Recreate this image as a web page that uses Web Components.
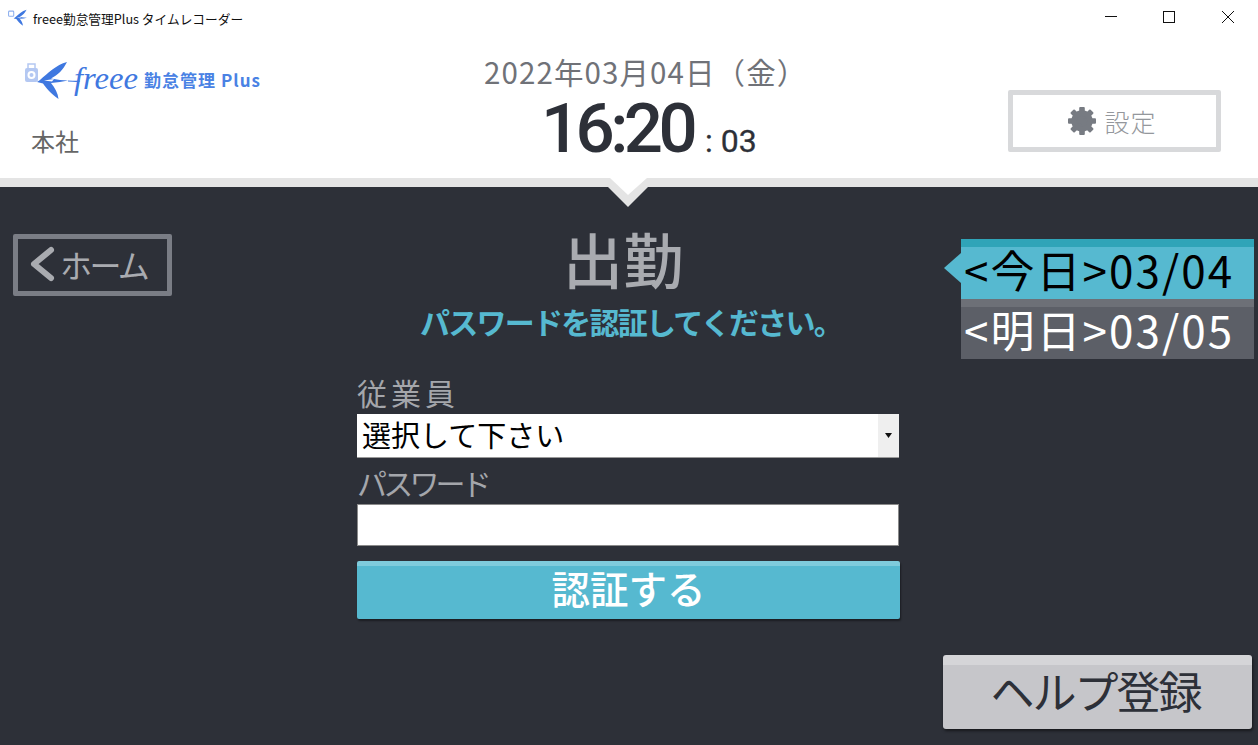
<!DOCTYPE html>
<html lang="ja">
<head>
<meta charset="utf-8">
<title>freee勤怠管理Plus タイムレコーダー</title>
<style>
  html, body { margin: 0; height: 100%; overflow: hidden; }
  body { font-family: "Noto Sans CJK JP", "Noto Sans", sans-serif; background: #2d3038; }
  time-recorder { width: 1258px; height: 745px; }
</style>
</head>
<body>
<time-recorder>
  <title-bar slot="top">freee勤怠管理Plus タイムレコーダー</title-bar>
  <app-header slot="top"></app-header>
  <home-button slot="left">ホーム</home-button>
  <auth-form slot="center"></auth-form>
  <day-tab slot="right" active>&lt;今日&gt;03/04</day-tab>
  <day-tab slot="right">&lt;明日&gt;03/05</day-tab>
  <help-button slot="right">ヘルプ登録</help-button>
</time-recorder>

<script>
const FONT = '"Noto Sans CJK JP", "Noto Sans", sans-serif';

function define(name, html) {
  customElements.define(name, class extends HTMLElement {
    constructor() {
      super();
      this.attachShadow({ mode: 'open' }).innerHTML = html;
    }
  });
}

const BIRD = `
  <path d="M40 78 C48 71 56 63 67 60 C63 68 58 73 51 76.5 L60 78 L68 78.5 L60 80 L51 81 C55 86 58 91 58.5 97 C51 92 46 86 43 81.5 L37 80 Z" fill="#3f78e0"/>
  <path d="M44 78.5 L54 77 L52 79.5 Z" fill="#fff"/>`;

define('title-bar', `
  <style>
    :host { display: flex; align-items: center; height: 36px; background: #fff; color: #111;
      font: 12.7px ${FONT}; box-sizing: border-box; padding-left: 8px; }
    .icon { width: 20px; height: 18px; margin-right: 5px; }
    .text { flex: 1; white-space: nowrap; }
    .ctl { display: flex; }
    .ctl svg { width: 59px; height: 36px; display: block; }
  </style>
  <svg class="icon" viewBox="24 58 46 42"><rect x="25" y="63" width="12" height="12" rx="2" fill="none" stroke="#8fb0ee" stroke-width="2.5"/>${BIRD}</svg>
  <span class="text"><slot></slot></span>
  <span class="ctl">
    <svg viewBox="0 0 59 36"><path d="M24 16.5H36" stroke="#111" fill="none"/></svg>
    <svg viewBox="0 0 59 36"><rect x="23.5" y="11.5" width="11" height="11" stroke="#111" fill="none"/></svg>
    <svg viewBox="0 0 59 36"><path d="M23 11L35 23M35 11L23 23" stroke="#111" fill="none"/></svg>
  </span>`);

define('brand-logo', `
  <style>
    :host { display: block; width: 240px; height: 40px; }
    svg { display: block; width: 240px; height: 40px; }
  </style>
  <svg viewBox="24 58 240 40">
    <rect x="25" y="66" width="13" height="14" rx="2" fill="#b4c8f2"/>
    <rect x="28" y="62" width="7" height="5" fill="none" stroke="#b4c8f2" stroke-width="1.5"/>
    <circle cx="31.5" cy="73" r="4" fill="#fff"/>
    <circle cx="31.5" cy="73" r="2" fill="#b4c8f2"/>
    ${BIRD}
    <path d="M68 79 C73 79 76 80 80 79" stroke="#3f78e0" stroke-width="1.2" fill="none"/>
    <text x="74" y="87" font-family="Liberation Serif" font-style="italic" font-size="31" fill="#3f78e0" textLength="64" lengthAdjust="spacingAndGlyphs">freee</text>
    <text x="144" y="85" font-family="Noto Sans CJK JP" font-weight="700" font-size="17" fill="#4a82e4" textLength="116">勤怠管理 Plus</text>
  </svg>`);

define('clock-display', `
  <style>
    :host { display: flex; flex-direction: column; align-items: flex-start; font-family: ${FONT}; }
    .date { font: 400 29.5px/40px "Noto Sans CJK JP", sans-serif; color: #707278; margin-left: 127px; white-space: nowrap; letter-spacing: 1.1px; }
    .time { display: flex; align-items: baseline; margin: 2px 0 0 184px; color: #2d3038; white-space: nowrap; font-family: Roboto, sans-serif; }
    .hm { font-size: 69px; line-height: 72px; font-weight: 500; letter-spacing: -4.6px; }
    .s { font-size: 32px; font-weight: 400; margin-left: 12px; -webkit-text-stroke: .3px #2d3038; }
  </style>
  <div class="date">2022年03月04日（金）</div>
  <div class="time"><span class="hm">16:20</span><span class="s">: 03</span></div>`);

define('settings-button', `
  <style>
    :host { display: flex; align-items: center; justify-content: center; gap: 8px; box-sizing: border-box;
      width: 213px; height: 62px; border: 5px solid #d8d9db; border-radius: 2px; background: #fff;
      color: #94979c; font: 300 25px ${FONT}; letter-spacing: 1px; padding-right: 4px; }
    svg { width: 28px; height: 28px; }
  </style>
  <svg viewBox="-14 -14 28 28"><g fill="#777b82">
    <rect x="-2.8" y="-14" width="5.6" height="28" rx="1"/>
    <rect x="-2.8" y="-14" width="5.6" height="28" rx="1" transform="rotate(45)"/>
    <rect x="-2.8" y="-14" width="5.6" height="28" rx="1" transform="rotate(90)"/>
    <rect x="-2.8" y="-14" width="5.6" height="28" rx="1" transform="rotate(135)"/>
  </g><circle r="8" fill="none" stroke="#777b82" stroke-width="5.5"/></svg>
  <span><slot>設定</slot></span>`);

define('app-header', `
  <style>
    :host { display: grid; grid-template-columns: 357px 543px 358px; height: 142px; background: #fff; }
    .brand { padding: 24px 0 0 24px; }
    .office { font: 400 24px/30px ${FONT}; color: #666; margin: 26px 0 0 7px; }
    clock-display { padding-top: 15px; }
    .right { padding: 54px 0 0 108px; }
  </style>
  <div class="brand"><brand-logo></brand-logo><div class="office">本社</div></div>
  <clock-display></clock-display>
  <div class="right"><settings-button></settings-button></div>`);

define('home-button', `
  <style>
    :host { display: inline-flex; align-items: center; box-sizing: border-box; width: 159px; height: 62px;
      border: 5px solid #7a7d85; border-radius: 2px; color: #a9abb0; font: 400 32px ${FONT}; padding: 0 0 3px 10px; letter-spacing: -2.6px; }
    svg { width: 28px; height: 38px; margin-right: 4px; }
  </style>
  <svg viewBox="0 0 28 38"><path d="M23 5L6 19L23 33" fill="none" stroke="#a9abb0" stroke-width="6" stroke-linecap="round" stroke-linejoin="round"/></svg>
  <slot></slot>`);

define('form-label', `
  <style>
    :host { display: block; color: #a4a6ab; font: 400 29px/36px ${FONT}; white-space: nowrap; }
  </style>
  <slot></slot>`);

define('select-box', `
  <style>
    :host { display: flex; height: 44px; background: #fff; color: #000; font: 400 29px/40px ${FONT}; box-sizing: border-box; border-bottom: 1px solid #999; margin-right: 1px; }
    .v { flex: 1; padding-left: 5px; }
    .b { width: 21px; background: #efefef; display: flex; align-items: center; justify-content: center; }
    .b svg { width: 7px; height: 5px; }
  </style>
  <span class="v"><slot></slot></span>
  <span class="b"><svg viewBox="0 0 7 5"><path d="M0 0H7L3.5 5Z" fill="#111"/></svg></span>`);

define('text-box', `
  <style>
    :host { display: block; height: 42px; box-sizing: border-box; background: #fff; border: 1px solid #8a8a8a; margin-right: 1px; }
  </style>`);

define('primary-button', `
  <style>
    :host { display: flex; align-items: center; justify-content: center; height: 58px; box-sizing: border-box;
      background: #56b9d0; border-top: 5px solid #7fcbdc; border-radius: 2px; color: #fff; font: 500 38.5px ${FONT};
      box-shadow: 1px 2px 2px rgba(0,0,0,.4); padding-bottom: 12px; }
  </style>
  <slot></slot>`);

define('auth-form', `
  <style>
    :host { display: flex; flex-direction: column; font-family: ${FONT}; }
    h1 { margin: 33px 0 0; text-align: center; padding-right: 10px; font: 500 60px/76px ${FONT}; color: #a9abb0; letter-spacing: .5px; }
    p { margin: 3px 0 0; text-align: center; font: 700 30px/44px ${FONT}; color: #56b9d0; padding-left: 5px; letter-spacing: -1.75px; white-space: nowrap; }
    form-label { font-size: 30px; }
    form-label.a { margin-top: 31px; letter-spacing: 4px; height: 40px; }
    form-label.b { margin-top: 6px; letter-spacing: -3.8px; height: 40px; }
    primary-button { margin-top: 15px; }
  </style>
  <h1>出勤</h1>
  <p>パスワードを認証してください。</p>
  <form-label class="a">従業員</form-label>
  <select-box>選択して下さい</select-box>
  <form-label class="b">パスワード</form-label>
  <text-box></text-box>
  <primary-button>認証する</primary-button>`);

define('day-tab', `
  <style>
    :host { display: flex; align-items: center; position: relative; box-sizing: border-box; width: 293px; height: 60px;
      background: #5c5f67; border-top: 8px solid #6d7077; color: #fff; font: 400 44px/52px ${FONT};
      padding: 0 0 9px 3px; white-space: nowrap; letter-spacing: 2.05px; }
    :host([active]) { background: #56b9d0; border-top-color: #2fa4b8; color: #000; }
    .tip { display: none; position: absolute; left: -17px; top: 6px; width: 17px; height: 30px; }
    :host([active]) .tip { display: block; }
  </style>
  <svg class="tip" viewBox="0 0 17 30"><path d="M0 15L17 0V30Z" fill="#56b9d0"/></svg>
  <slot></slot>`);

define('help-button', `
  <style>
    :host { display: flex; align-items: center; justify-content: center; position: absolute; left: 43px; top: 468px;
      box-sizing: border-box; width: 309px; height: 74px; background: #c6c6ca; border-top: 10px solid #d5d5d8; border-radius: 3px;
      color: #2d3038; font: 400 44px ${FONT}; letter-spacing: -2px; box-shadow: 1px 2px 3px rgba(0,0,0,.5); padding: 0 4px 14px 0; }
  </style>
  <slot></slot>`);

define('time-recorder', `
  <style>
    :host { display: block; position: relative; overflow: hidden; background: #2d3038; }
    .band { height: 9px; background: #e4e4e4; }
    .main { display: grid; grid-template-columns: 357px 543px 358px; height: 558px; }
    .left { padding: 47px 0 0 13px; }
    .right { padding: 52px 0 0 61px; position: relative; }
    .notch { position: absolute; left: 606px; top: 178px; width: 44px; height: 30px; }
  </style>
  <slot name="top"></slot>
  <div class="band"></div>
  <div class="main">
    <div class="left"><slot name="left"></slot></div>
    <div class="center"><slot name="center"></slot></div>
    <div class="right"><slot name="right"></slot></div>
  </div>
  <svg class="notch" viewBox="0 0 44 30"><path d="M2 9H42L22 29Z" fill="#e4e4e4"/><path d="M4 0H41L22 17Z" fill="#fff"/></svg>`);
</script>
</body>
</html>
